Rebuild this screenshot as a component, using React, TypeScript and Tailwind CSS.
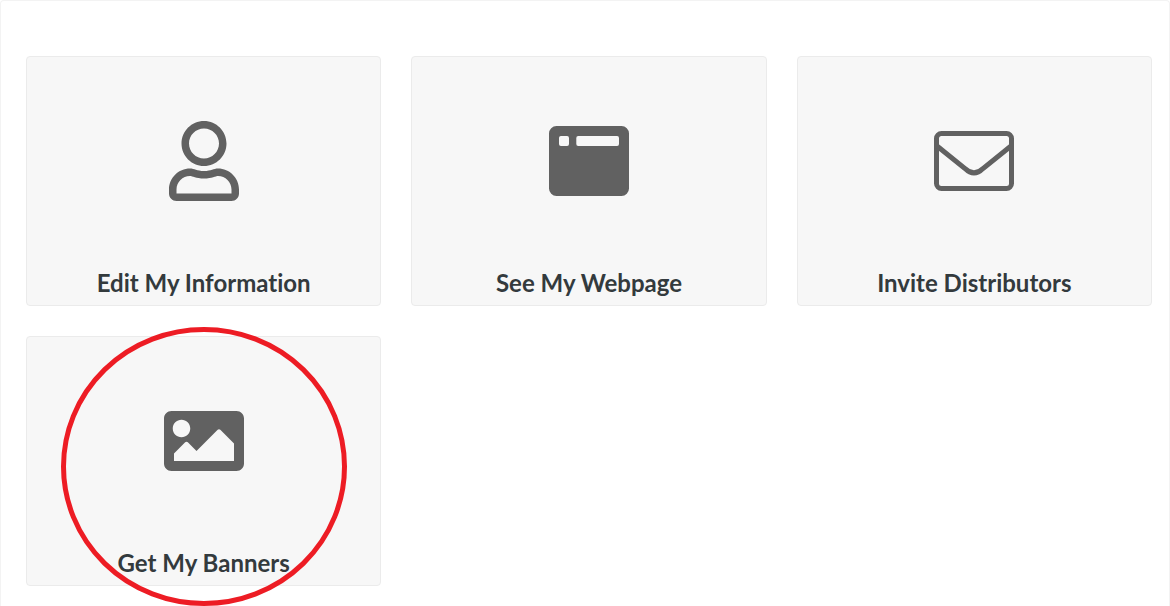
import type { ReactNode } from "react";
import { FaImage, FaRegUser } from "react-icons/fa";

function WindowIcon() {
  return (
    <svg viewBox="0 0 80 80" className="size-20" fill="currentColor" aria-hidden="true">
      <path
        fillRule="evenodd"
        d="M7.5 5h65A7.5 7.5 0 0 1 80 12.5v55a7.5 7.5 0 0 1-7.5 7.5h-65A7.5 7.5 0 0 1 0 67.5v-55A7.5 7.5 0 0 1 7.5 5zM11.9 15A1.9 1.9 0 0 0 10 16.9v6.2A1.9 1.9 0 0 0 11.9 25h6.2a1.9 1.9 0 0 0 1.9-1.9v-6.2a1.9 1.9 0 0 0-1.9-1.9zM29.2 15a1.9 1.9 0 0 0-1.9 1.9v6.2a1.9 1.9 0 0 0 1.9 1.9h38.9a1.9 1.9 0 0 0 1.9-1.9v-6.2a1.9 1.9 0 0 0-1.9-1.9z"
      />
    </svg>
  );
}

function EnvelopeIcon() {
  return (
    <svg viewBox="0 0 80 80" className="size-20" fill="none" stroke="currentColor" strokeWidth="5" aria-hidden="true">
      <rect x="2.5" y="12.5" width="75" height="55" rx="5" />
      <path d="M3 25L31 47.5C37 53.4 43 53.4 49 47.5L77 25" />
    </svg>
  );
}

type Item = { label: string; icon: ReactNode; href: string; circled?: boolean };

const items: Item[] = [
  { label: "Edit My Information", icon: <FaRegUser className="size-20" />, href: "#information" },
  { label: "See My Webpage", icon: <WindowIcon />, href: "#webpage" },
  { label: "Invite Distributors", icon: <EnvelopeIcon />, href: "#invite" },
  { label: "Get My Banners", icon: <FaImage className="size-20" />, href: "#banners", circled: true },
];

function Card({ label, icon, href, circled }: Item) {
  return (
    <a
      href={href}
      className="relative flex flex-col items-center rounded border border-[#ebebeb] bg-[#f7f7f7] pt-16 pb-1 text-[#616161]"
    >
      {icon}
      <span className="mt-16 text-2xl leading-9 font-bold text-[#333a3d] [font-variant-ligatures:none]">{label}</span>
      {circled && (
        <svg
          viewBox="0 0 286 280"
          className="pointer-events-none absolute -top-[10px] left-[34px] h-[280px] w-[286px]"
          fill="none"
          aria-hidden="true"
        >
          <ellipse cx="143" cy="139.5" rx="140.5" ry="137" stroke="#ed1c24" strokeWidth="5" />
        </svg>
      )}
    </a>
  );
}

export default function App() {
  return (
    <main className="min-h-screen rounded-t border-x border-t border-[#f3f3f3] bg-white pt-[55px] pr-[17px] pb-5 pl-[25px] font-['Lato',sans-serif]">
      <div className="grid grid-cols-3 gap-[30px]">
        {items.map((item) => (
          <Card key={item.label} {...item} />
        ))}
      </div>
    </main>
  );
}
